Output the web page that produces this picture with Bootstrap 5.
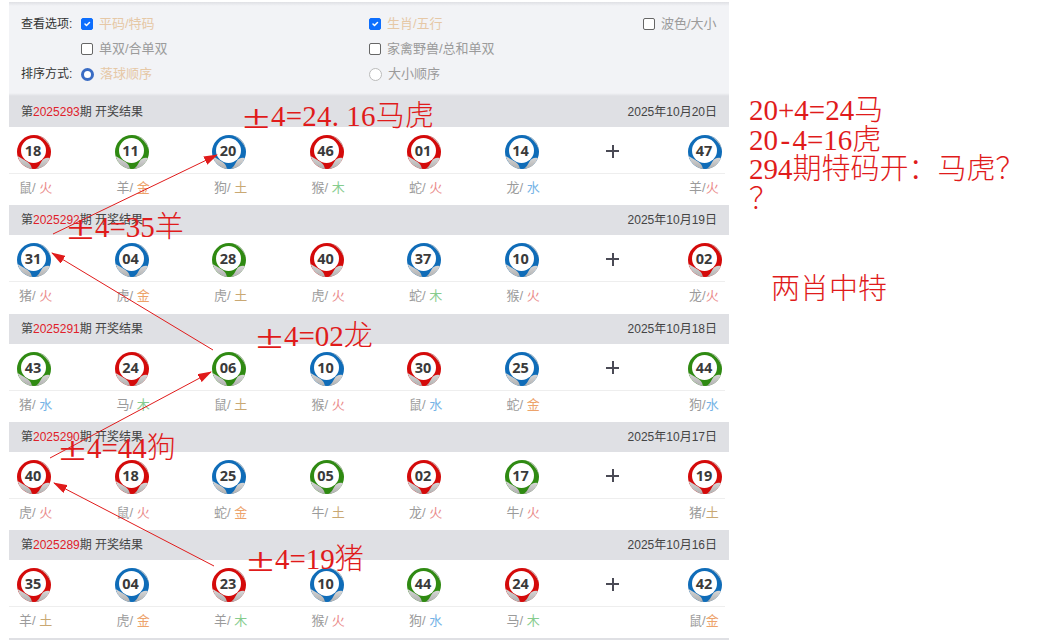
<!DOCTYPE html>
<html lang="zh-CN">
<head>
  <meta charset="UTF-8" />
  <meta name="viewport" content="width=device-width, initial-scale=1.0" />
  <title>开奖结果</title>
  <link href="https://cdn.jsdelivr.net/npm/bootstrap@5.3.0/dist/css/bootstrap.min.css" rel="stylesheet" />
  <style>
    html, body { height: 640px; overflow: hidden; }
    body { font-family: "Liberation Sans", "Noto Sans CJK SC", sans-serif; font-size: 12px; color: #333; background: #fff; }
    .page-wrap { width: 1063px; height: 640px; }
    .main-col { width: 720px; margin-left: 9px; padding-top: 2px; flex: none; }
    .opt-panel { height: 95px; background: linear-gradient(#dfe0e4, #f2f3f6 4px, #f2f3f6 91px, #dfe0e4 94px); padding: 9px 12px 0; }
    .opt-row { height: 25px; padding-top: 1px; }
    .opt-title { width: 60px; flex: none; }
    .opt-a { width: 288px; flex: none; }
    .opt-b { width: 274px; flex: none; }
    .opt-item { color: #9b9b9b; font-size: 13px; }
    .opt-item.on { color: #e6c8a6; }
    .opt-panel .form-check-input { width: 12px; height: 12px; margin: 0 6px 0 0; flex: none; border-color: #666; border-radius: 2px; }
    .opt-panel .form-check-input:checked { background-color: #0d6efd; border-color: #0d6efd; }
    .opt-panel .form-check-input[type=radio] { width: 13px; height: 13px; border-radius: 50%; border-color: #bbb; }
    .opt-panel .form-check-input[type=radio]:checked { background: #fff; border: 3.5px solid #3a6cc4; }
    .draw-block { height: 108.25px; }
    .draw-head { height: 30px; background: #dfe0e4; padding: 0 12px; color: #444; }
    .draw-head em { font-style: normal; color: #e0202a; }
    .draw-grid { display: grid; grid-template-columns: repeat(6, 97.5px) 86px 34px; padding-left: 8px; }
    .ball-row { height: 47px; padding-top: 4px; align-items: center; margin-right: 4px; border-bottom: 1px solid #eee; }
    .ball-pic { position: relative; width: 34px; height: 34px; }
    .ball-pic svg { display: block; width: 34px; height: 34px; }
    .ball-num { position: absolute; left: 0; top: 0; width: 32px; line-height: 31px; text-align: center; font-family: "Open Sans", "Liberation Sans", sans-serif; font-weight: 700; font-size: 14.5px; color: #3a3a3a; }
    .plus-sign { width: 13px; height: 2px; margin: -2px 0 0 4px; background: #4a4a55; position: relative; }
    .plus-sign::after { content: ""; position: absolute; left: 5.5px; top: -5.5px; width: 2px; height: 13px; background: #4a4a55; }
    .zodiac-row { padding-top: 4px; color: #9b9b9b; font-size: 13px; }
    .cell-text { padding-left: 2px; white-space: nowrap; }
    .cell-text.last-cell { padding-left: 1px; }
    .el-fire { color: #ea8a8a; } .el-gold { color: #eda36b; } .el-earth { color: #c9a873; } .el-wood { color: #86cc8e; } .el-water { color: #74b3e6; }
    .list-end { height: 2px; background: #dfe0e4; }
    .note-col { width: 290px; margin-left: 20px; padding-top: 96px; color: #e01b1b; font-family: "Liberation Serif", "Noto Sans CJK SC", serif; font-weight: 300; font-size: 29px; line-height: 29.7px; white-space: nowrap; }
    .note-gap { margin: 60px 0 0 22px; }
    .half-w { display: inline-block; width: .5em; text-align: center; }
    .half-w.to-left { text-align: left; }
    .plus-minus { display: inline-block; width: 1em; text-align: center; transform: scale(1.7, 1.15); }
    .mark-layer { position: absolute; left: 0; top: 0; width: 1063px; height: 640px; pointer-events: none; }
    .mark-text { position: absolute; color: #e01b1b; font-family: "Liberation Serif", "Noto Sans CJK SC", serif; font-weight: 300; font-size: 29px; line-height: 30px; white-space: nowrap; }
    .mark-1 { left: 242px; top: 101px; letter-spacing: .25px; }
    .mark-2 { left: 66px; top: 212px; }
    .mark-3 { left: 255px; top: 321px; }
    .mark-4 { left: 58px; top: 433px; }
    .mark-5 { left: 246px; top: 544px; }
  </style>
</head>

<body>
  <svg width="0" height="0" class="position-absolute">
    <defs>
      <linearGradient id="ballGrey" x1="0" y1="0" x2="0" y2="1">
        <stop offset="0" stop-color="#d6d6d6" />
        <stop offset="1" stop-color="#b0b0b0" />
      </linearGradient>
    </defs>
    <symbol id="ballShape" viewBox="0 0 34 34">
      <circle cx="17" cy="17" r="17" fill="currentColor" />
      <path d="M0.5 21 A17 17 0 0 0 15 33.9 Q14 28.5 9 26 Q4 23 0.5 21 Z" fill="url(#ballGrey)" />
      <path d="M19 33.9 A17 17 0 0 0 33 23 Q27 22 24.5 26.5 Q22.5 31 19 33.9 Z" fill="url(#ballGrey)" />
      <path d="M21 0.5 A17 17 0 0 1 34 15 Q31 5 21 0.5 Z" fill="#c4c4c4" />
      <circle cx="16.5" cy="15.5" r="12.5" fill="#fff" />
    </symbol>
  </svg>

  <div class="page-wrap position-relative d-flex">
    <div class="main-col">
      <div class="opt-panel">
        <div class="opt-row d-flex align-items-center">
          <div class="opt-title">查看选项:</div>
          <label class="opt-a opt-item on d-flex align-items-center"><input class="form-check-input" type="checkbox" checked />平码/特码</label>
          <label class="opt-b opt-item on d-flex align-items-center"><input class="form-check-input" type="checkbox" checked />生肖/五行</label>
          <label class="opt-item d-flex align-items-center"><input class="form-check-input" type="checkbox" />波色/大小</label>
        </div>
        <div class="opt-row d-flex align-items-center">
          <div class="opt-title"></div>
          <label class="opt-a opt-item d-flex align-items-center"><input class="form-check-input" type="checkbox" />单双/合单双</label>
          <label class="opt-b opt-item d-flex align-items-center"><input class="form-check-input" type="checkbox" />家禽野兽/总和单双</label>
        </div>
        <div class="opt-row d-flex align-items-center">
          <div class="opt-title">排序方式:</div>
          <label class="opt-a opt-item on d-flex align-items-center"><input class="form-check-input" type="radio" name="sortWay" checked />落球顺序</label>
          <label class="opt-b opt-item d-flex align-items-center"><input class="form-check-input" type="radio" name="sortWay" />大小顺序</label>
        </div>
      </div>
      <div id="drawList"></div>
      <div class="list-end"></div>
    </div>

    <div class="note-col">
      <div>20+4=24马</div>
      <div>20<span class="half-w">-</span>4=16虎</div>
      <div>294期特码开&#xFF1A;马虎&#xFF1F;<br />&#xFF1F;</div>
      <div class="note-gap">两肖中特</div>
    </div>

    <div class="mark-layer">
      <svg width="1063" height="640">
        <defs>
          <marker id="arrowHead" markerWidth="14" markerHeight="9" refX="13" refY="4.5" orient="auto" markerUnits="userSpaceOnUse">
            <path d="M0 0 L14 4.5 L0 9 Z" fill="#e01b1b" />
          </marker>
        </defs>
        <g stroke="#e01b1b" stroke-width="1" fill="none">
          <line x1="53" y1="234" x2="217" y2="155" marker-end="url(#arrowHead)" />
          <line x1="213" y1="350" x2="52" y2="253" marker-end="url(#arrowHead)" />
          <line x1="50" y1="458" x2="211" y2="372" marker-end="url(#arrowHead)" />
          <line x1="214" y1="566" x2="54" y2="483" marker-end="url(#arrowHead)" />
        </g>
      </svg>
      <div class="mark-text mark-1"><span class="plus-minus">±</span>4=24<span class="half-w to-left">.</span>16马虎</div>
      <div class="mark-text mark-2"><span class="plus-minus">±</span>4=35羊</div>
      <div class="mark-text mark-3"><span class="plus-minus">±</span>4=02龙</div>
      <div class="mark-text mark-4"><span class="plus-minus">±</span>4=44狗</div>
      <div class="mark-text mark-5"><span class="plus-minus">±</span>4=19猪</div>
    </div>
  </div>

  <script src="https://cdn.jsdelivr.net/npm/bootstrap@5.3.0/dist/js/bootstrap.bundle.min.js"></script>
  <script>
    const corBola = { r: '#d40a0a', g: '#2f8a12', b: '#0f6cb8' };
    const classeElemento = { '火': 'el-fire', '金': 'el-gold', '土': 'el-earth', '木': 'el-wood', '水': 'el-water' };

    const sorteios = [
      { periodo: '2025293', data: '2025年10月20日', bolas: ['18r鼠火', '11g羊金', '20b狗土', '46r猴木', '01r蛇火', '14b龙水', '47b羊火'] },
      { periodo: '2025292', data: '2025年10月19日', bolas: ['31b猪火', '04b虎金', '28g虎土', '40r虎火', '37b蛇木', '10b猴火', '02r龙火'] },
      { periodo: '2025291', data: '2025年10月18日', bolas: ['43g猪水', '24r马木', '06g鼠土', '10b猴火', '30r鼠水', '25b蛇金', '44g狗水'] },
      { periodo: '2025290', data: '2025年10月17日', bolas: ['40r虎火', '18r鼠火', '25b蛇金', '05g牛土', '02r龙火', '17g牛火', '19r猪土'] },
      { periodo: '2025289', data: '2025年10月16日', bolas: ['35r羊土', '04b虎金', '23r羊木', '10b猴火', '44g狗水', '24r马木', '42b鼠金'] }
    ];

    function montarBola(b) {
      return `<div class="ball-pic" style="color:${corBola[b[2]]}"><svg><use href="#ballShape" /></svg><div class="ball-num">${b.slice(0, 2)}</div></div>`;
    }

    function montarTexto(b, ultimo) {
      const espaco = ultimo ? '' : ' ';
      return `<span class="cell-text${ultimo ? ' last-cell' : ''}">${b[3]}/${espaco}<span class="${classeElemento[b[4]]}">${b[4]}</span></span>`;
    }

    document.getElementById('drawList').innerHTML = sorteios.map(s => {
      const normais = s.bolas.slice(0, 6);
      const especial = s.bolas[6];
      return `
        <div class="draw-block">
          <div class="draw-head d-flex justify-content-between align-items-center">
            <div>第<em>${s.periodo}</em>期 开奖结果</div>
            <div>${s.data}</div>
          </div>
          <div class="draw-grid ball-row">
            ${normais.map(montarBola).join('')}
            <div class="plus-sign"></div>
            ${montarBola(especial)}
          </div>
          <div class="draw-grid zodiac-row">
            ${normais.map(b => montarTexto(b, false)).join('')}
            <div></div>
            ${montarTexto(especial, true)}
          </div>
        </div>`;
    }).join('');
  </script>
</body>

</html>
